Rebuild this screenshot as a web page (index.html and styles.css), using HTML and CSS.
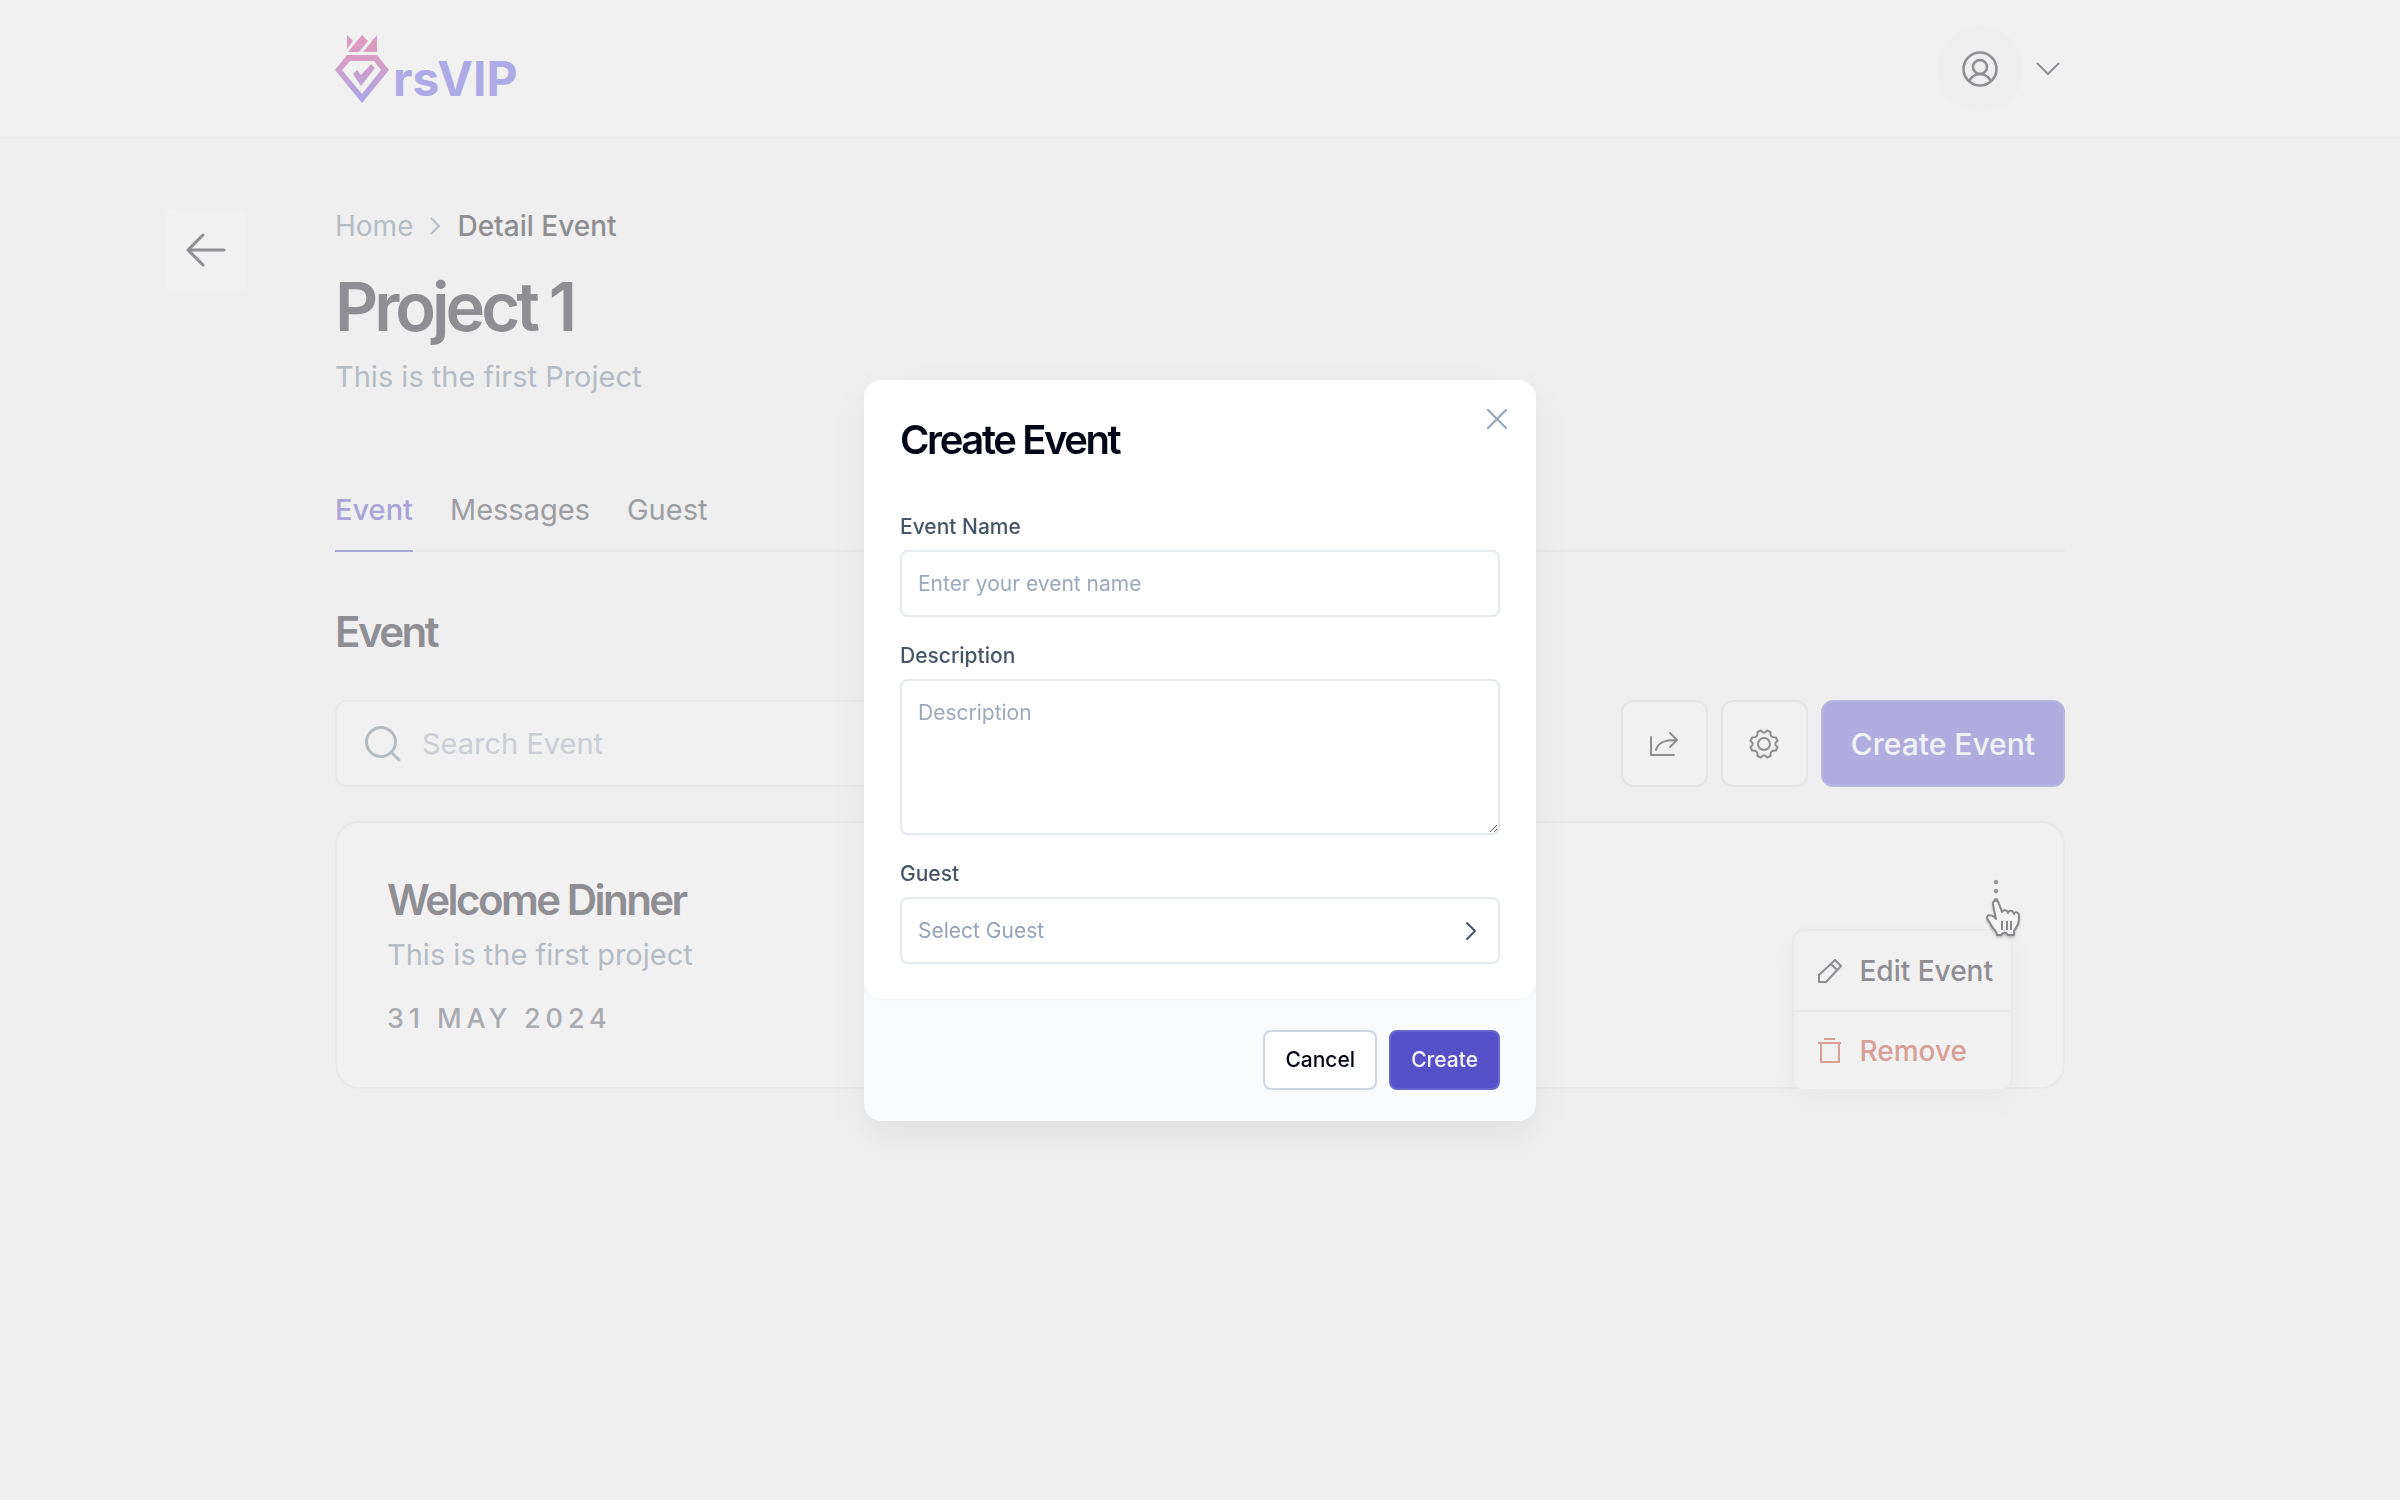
FILE: index.html
```
<!DOCTYPE html>
<html lang="en">

<head>
    <meta charset="UTF-8">
    <meta name="viewport" content="width=device-width, initial-scale=1.0">
    <title>rsVIP - Detail Event</title>
    <link rel="stylesheet" href="styles.css">
</head>

<body>
    <header class="site-header">
        <div class="header-inner">
            <a href="#" class="logo">
                <svg width="56" height="72" viewBox="0 0 56 72" aria-hidden="true">
                    <defs>
                        <linearGradient id="logo-fill" x1="0" y1="0" x2="0" y2="72" gradientUnits="userSpaceOnUse">
                            <stop offset="0.3" stop-color="#dc9cc0" />
                            <stop offset="0.95" stop-color="#aaa6e6" />
                        </linearGradient>
                    </defs>
                    <g fill="url(#logo-fill)">
                        <path d="M12 2l6 6-6 8z" />
                        <path d="M13 19L27 2l6 6-9 11z" />
                        <path d="M28 19L42 2v17z" />
                        <path fill-rule="evenodd" d="M12 22h30l12 15-27 33L0 37zM15 28L7 37l20 24 19-24-7-9z" />
                        <path d="M18 41l4-4 4 5 10-11 4 4-14 18z" />
                    </g>
                </svg>
                <span class="logo-text">rsVIP</span>
            </a>
            <div class="account">
                <button type="button" class="avatar" aria-label="Account">
                    <svg width="36" height="36" viewBox="0 0 36 36" fill="none" stroke="currentColor" stroke-width="2.600">
                        <circle cx="18" cy="18" r="16.500" />
                        <circle cx="18" cy="16" r="7" />
                        <path d="M7 30c3-5 6-7 11-7s8 2 11 7" />
                    </svg>
                </button>
                <button type="button" class="account-toggle" aria-label="Open account menu">
                    <svg width="26" height="16" viewBox="0 0 26 16" fill="none" stroke="currentColor" stroke-width="2">
                        <path d="M2 2l11 11L24 2" />
                    </svg>
                </button>
            </div>
        </div>
    </header>

    <main class="page">
        <a href="#" class="back-btn" aria-label="Back">
            <svg width="40" height="34" viewBox="0 0 40 34" fill="none" stroke="currentColor" stroke-width="3" stroke-linecap="round" stroke-linejoin="round">
                <path d="M38 17H2M17 2L2 17l15 15" />
            </svg>
        </a>

        <div class="content">
            <nav class="breadcrumb">
                <a href="#">Home</a>
                <svg width="12" height="20" viewBox="0 0 12 20" fill="none" stroke="currentColor" stroke-width="2">
                    <path d="M2 2l8 8-8 8" />
                </svg>
                <span class="current">Detail Event</span>
            </nav>
            <h1>Project 1</h1>
            <p class="subtitle">This is the first Project</p>

            <nav class="tabs">
                <a href="#" class="tab active">Event</a>
                <a href="#" class="tab">Messages</a>
                <a href="#" class="tab">Guest</a>
            </nav>

            <h2>Event</h2>

            <div class="toolbar">
                <label class="search">
                    <svg width="38" height="38" viewBox="0 0 38 38" fill="none" stroke="currentColor" stroke-width="3" stroke-linecap="round">
                        <circle cx="17" cy="17" r="14.500" />
                        <path d="M27 27l8 8" />
                    </svg>
                    <input type="search" placeholder="Search Event" aria-label="Search Event">
                </label>
                <div class="actions">
                    <button type="button" class="icon-btn" aria-label="Share">
                        <svg width="30" height="26" viewBox="0 0 30 26" fill="none" stroke="currentColor" stroke-width="2" stroke-linecap="round" stroke-linejoin="round">
                            <path d="M2 6v18h23M7 19C9 12 14 9 28 9M21 2l7 7-7 7" />
                        </svg>
                    </button>
                    <button type="button" class="icon-btn" aria-label="Settings">
                        <svg width="30" height="30" viewBox="0 0 30 30" fill="none" stroke="currentColor" stroke-width="2" stroke-linejoin="round">
                            <circle cx="15" cy="15" r="6" />
                            <path d="M12 1.500Q15 6 18 1.500L21.500 3Q20.500 9 27 8.500L28.500 12Q24 15 28.500 18L27 21.500Q20.500 21 21.500 27L18 28.500Q15 24 12 28.500L8.500 27Q9.500 21 3 21.500L1.500 18Q6 15 1.500 12L3 8.500Q9.500 9 8.500 3Z" />
                        </svg>
                    </button>
                    <button type="button" class="create-btn">Create Event</button>
                </div>
            </div>

            <article class="event-card">
                <div class="event-info">
                    <h3>Welcome Dinner</h3>
                    <p class="event-desc">This is the first project</p>
                    <time class="event-date" datetime="2024-05-31">31 MAY 2024</time>
                </div>
                <div class="event-menu">
                    <button type="button" class="kebab" aria-label="Event options">
                        <svg width="6" height="24" viewBox="0 0 6 24" fill="currentColor">
                            <circle cx="3" cy="3" r="2.300" />
                            <circle cx="3" cy="12" r="2.300" />
                            <circle cx="3" cy="21" r="2.300" />
                        </svg>
                    </button>
                    <div class="menu">
                        <button type="button" class="menu-item">
                            <svg width="26" height="26" viewBox="0 0 26 26" fill="none" stroke="currentColor" stroke-width="2" stroke-linejoin="round">
                                <path d="M18 2l6 6L9 24H2v-7zM14 6l6 6" />
                            </svg>
                            Edit Event
                        </button>
                        <button type="button" class="menu-item remove">
                            <svg width="26" height="26" viewBox="0 0 26 26" fill="none" stroke="currentColor" stroke-width="2">
                                <path d="M1 5h23M7 1h11M4 5v19h18V5" />
                            </svg>
                            Remove
                        </button>
                    </div>
                    <svg class="pointer" width="36" height="40" viewBox="0 0 36 40" fill="#f4f4f4" stroke="#88888b" stroke-width="2" stroke-linejoin="round">
                        <path d="M12 36h4l2-2h3l2 2h6v-4l3-5c2-3 2-6 2-10 0-4-4-5-5-2-1-4-5-4-6-1-1-4-5-3-6-1L14 5c-1-5-7-4-6 1l3 14c-3-4-8-5-9-2-1 2 2 3 4 8 2 4 6 6 6 10z" />
                        <path d="M17 22v9M22 22v9M26 22v9" fill="none" />
                    </svg>
                </div>
            </article>
        </div>
    </main>

    <div class="overlay">
        <form class="modal" role="dialog" aria-labelledby="modal-title">
            <button type="button" class="close-btn" aria-label="Close">
                <svg width="20" height="20" viewBox="0 0 20 20" fill="none" stroke="currentColor" stroke-width="2" stroke-linecap="round">
                    <path d="M1 1l18 18M19 1L1 19" />
                </svg>
            </button>
            <div class="modal-body">
                <h2 id="modal-title">Create Event</h2>

                <div class="form-group">
                    <label for="event-name">Event Name</label>
                    <input type="text" id="event-name" name="event-name" placeholder="Enter your event name">
                </div>

                <div class="form-group">
                    <label for="description">Description</label>
                    <textarea id="description" name="description" placeholder="Description"></textarea>
                </div>

                <div class="form-group">
                    <label for="guest">Guest</label>
                    <div class="select-wrap">
                        <select id="guest" name="guest">
                            <option value="" disabled selected>Select Guest</option>
                        </select>
                        <svg width="12" height="20" viewBox="0 0 12 20" fill="none" stroke="currentColor" stroke-width="2" stroke-linecap="round" stroke-linejoin="round">
                            <path d="M2 2l8 8-8 8" />
                        </svg>
                    </div>
                </div>
            </div>
            <div class="modal-footer">
                <button type="button" class="btn">Cancel</button>
                <button type="submit" class="btn primary">Create</button>
            </div>
        </form>
    </div>
</body>

</html>
```
FILE: styles.css
```
* {
    box-sizing: border-box;
}

body {
    font-family: Inter, "Liberation Sans", sans-serif;
    margin: 0;
    min-height: 100vh;
    background-color: #efefef;
    color: #8e8e93;
}

h1,
h2,
h3,
p {
    margin: 0;
}

a {
    color: inherit;
    text-decoration: none;
}

button,
input,
textarea,
select {
    font-family: inherit;
    margin: 0;
}

button {
    cursor: pointer;
}

svg {
    display: block;
    flex-shrink: 0;
}

/* header */
.site-header {
    background: #f1f1f1;
    border-bottom: 2px solid #ebecec;
}

.header-inner {
    max-width: 1730px;
    height: 137px;
    margin: 0 auto;
    display: flex;
    justify-content: space-between;
    align-items: center;
}

.logo {
    display: flex;
    align-items: center;
    gap: 2px;
}

.logo-text {
    font-size: 48px;
    line-height: 48px;
    font-weight: 700;
    color: #aeaae6;
    padding-top: 21px;
}

.account {
    display: flex;
    align-items: center;
    gap: 12px;
}

.avatar {
    width: 86px;
    height: 86px;
    display: flex;
    justify-content: center;
    align-items: center;
    border: none;
    border-radius: 50%;
    background: #efefef;
    color: #8e8e93;
}

.account-toggle {
    padding: 2px 4px 2px 0;
    border: none;
    background: none;
    color: #8e8e93;
}

/* page */
.page {
    display: grid;
    grid-template-columns: 1fr minmax(0, 1730px) 1fr;
    padding: 70px 0;
}

.back-btn {
    justify-self: end;
    width: 82px;
    height: 82px;
    margin-right: 88px;
    display: flex;
    justify-content: center;
    align-items: center;
    border-radius: 8px;
    background: #f1f1f1;
    color: #8e8e93;
}

.breadcrumb {
    display: flex;
    align-items: center;
    gap: 16px;
    margin-bottom: 24px;
    font-size: 28px;
    line-height: 34px;
    color: #b5bcc4;
}

.breadcrumb .current {
    font-weight: 500;
    color: #8e8e91;
}

h1 {
    font-size: 67px;
    line-height: 80px;
    font-weight: 600;
    letter-spacing: -0.06em;
    color: #8e8e93;
}

.subtitle,
.event-desc {
    margin-top: 10px;
    font-size: 29px;
    line-height: 40px;
    color: #b5bcc4;
}

.tabs {
    display: flex;
    gap: 37px;
    margin-top: 93px;
    box-shadow: inset 0 -2px #e8eaea;
}

.tab {
    padding-bottom: 20px;
    border-bottom: 2px solid transparent;
    font-size: 29px;
    line-height: 40px;
    color: #9c9ea2;
}

.tab.active {
    font-weight: 500;
    color: #aaa5d8;
    border-color: #aaa7d8;
}

.content h2,
h3 {
    font-size: 42px;
    line-height: 50px;
    font-weight: 600;
    letter-spacing: -0.06em;
}

.content h2 {
    margin: 55px 0 43px;
}

.toolbar {
    display: flex;
    justify-content: space-between;
    align-items: center;
    margin-bottom: 34px;
}

.search {
    width: 50%;
    height: 87px;
    display: flex;
    align-items: center;
    gap: 20px;
    padding: 0 27px;
    border: 2px solid #e8eaea;
    border-radius: 12px;
    background: #f1f1f1;
    color: #b5bcc1;
}

.search input {
    flex: 1;
    min-width: 0;
    padding: 0;
    border: none;
    outline: none;
    background: none;
    font-size: 29px;
}

.search input::placeholder {
    color: #cbced5;
}

.actions {
    display: flex;
    gap: 13px;
}

.icon-btn {
    width: 87px;
    height: 87px;
    display: flex;
    justify-content: center;
    align-items: center;
    padding: 0;
    border: 2px solid #e3e5e7;
    border-radius: 12px;
    background: #f1f1f1;
    color: #8e8e91;
}

.create-btn {
    padding: 0 28px;
    border: 2px solid #b8b5e0;
    border-radius: 12px;
    background: #b0adde;
    color: #f1f1f8;
    font-size: 30px;
    font-weight: 500;
}

/* event card */
.event-card {
    display: flex;
    justify-content: space-between;
    align-items: flex-start;
    padding: 52px 50px 50px;
    border: 2px solid #e8eaea;
    border-radius: 24px;
    background: #f1f1f1;
}

.event-date {
    display: block;
    margin-top: 26px;
    font-size: 27px;
    line-height: 36px;
    font-weight: 500;
    letter-spacing: 0.18em;
    color: #a9abb0;
}

.event-menu {
    position: relative;
}

.kebab {
    width: 34px;
    height: 32px;
    display: flex;
    justify-content: center;
    align-items: center;
    padding: 0;
    border: none;
    background: none;
    color: #98989b;
}

.menu {
    position: absolute;
    top: 54px;
    right: 0;
    border: 2px solid #e9ebeb;
    border-radius: 12px;
    background: #f1f1f1;
    box-shadow: 0 10px 30px rgba(0, 0, 0, 0.03);
}

.menu-item {
    width: 100%;
    height: 79px;
    display: flex;
    align-items: center;
    gap: 16px;
    padding: 0 18px 0 23px;
    border: none;
    background: none;
    font-size: 28px;
    font-weight: 500;
    white-space: nowrap;
    color: #8e8e93;
}

.menu-item.remove {
    border-top: 2px solid #e8eaea;
    color: #d79f98;
}

.pointer {
    position: absolute;
    top: 24px;
    left: 6px;
    filter: drop-shadow(0 2px 1px rgba(0, 0, 0, 0.2));
}

/* create event modal */
.overlay {
    position: fixed;
    inset: 0;
    display: flex;
    justify-content: center;
    align-items: center;
}

.modal {
    position: relative;
    width: 100%;
    max-width: 672px;
    border-radius: 18px;
    background: #fafbfc;
    box-shadow: 0 16px 40px rgba(0, 0, 0, 0.06);
}

.modal-body {
    padding: 36px 36px 35px;
    border-radius: 18px;
    background: #fff;
    box-shadow: 0 1px 2px rgba(0, 0, 0, 0.04);
}

.modal h2 {
    margin-bottom: 51px;
    font-size: 40px;
    line-height: 48px;
    font-weight: 600;
    letter-spacing: -0.06em;
    color: #020617;
}

.close-btn {
    position: absolute;
    top: 26px;
    right: 26px;
    padding: 3px;
    border: none;
    background: none;
    color: #94a3b8;
}

.form-group + .form-group {
    margin-top: 27px;
}

.form-group label {
    display: block;
    margin-bottom: 11px;
    font-size: 21px;
    line-height: 24px;
    font-weight: 500;
    color: #475569;
}

.form-group input,
.form-group textarea,
.form-group select {
    display: block;
    width: 100%;
    height: 67px;
    padding: 0 16px;
    border: 2px solid #e5e9f0;
    border-radius: 8px;
    outline: none;
    background: #fff;
    box-shadow: 0 1px 2px rgba(0, 0, 0, 0.04);
    font-size: 21px;
    color: #94a3b8;
}

.form-group textarea {
    height: 156px;
    padding: 16px;
    line-height: 32px;
}

.form-group select {
    appearance: none;
}

.form-group ::placeholder {
    color: #9ca9bc;
}

.select-wrap {
    position: relative;
}

.select-wrap svg {
    position: absolute;
    top: 24px;
    right: 23px;
    color: #475569;
    pointer-events: none;
}

.modal-footer {
    display: flex;
    justify-content: flex-end;
    gap: 12px;
    padding: 31px 36px;
}

.btn {
    height: 60px;
    padding: 0 20px;
    border: 2px solid #cfd6e0;
    border-radius: 8px;
    background: #fff;
    font-size: 21px;
    font-weight: 500;
    color: #020617;
}

.btn.primary {
    border-color: #6a66cf;
    background: #5451c8;
    color: #f4f4ff;
}
```
